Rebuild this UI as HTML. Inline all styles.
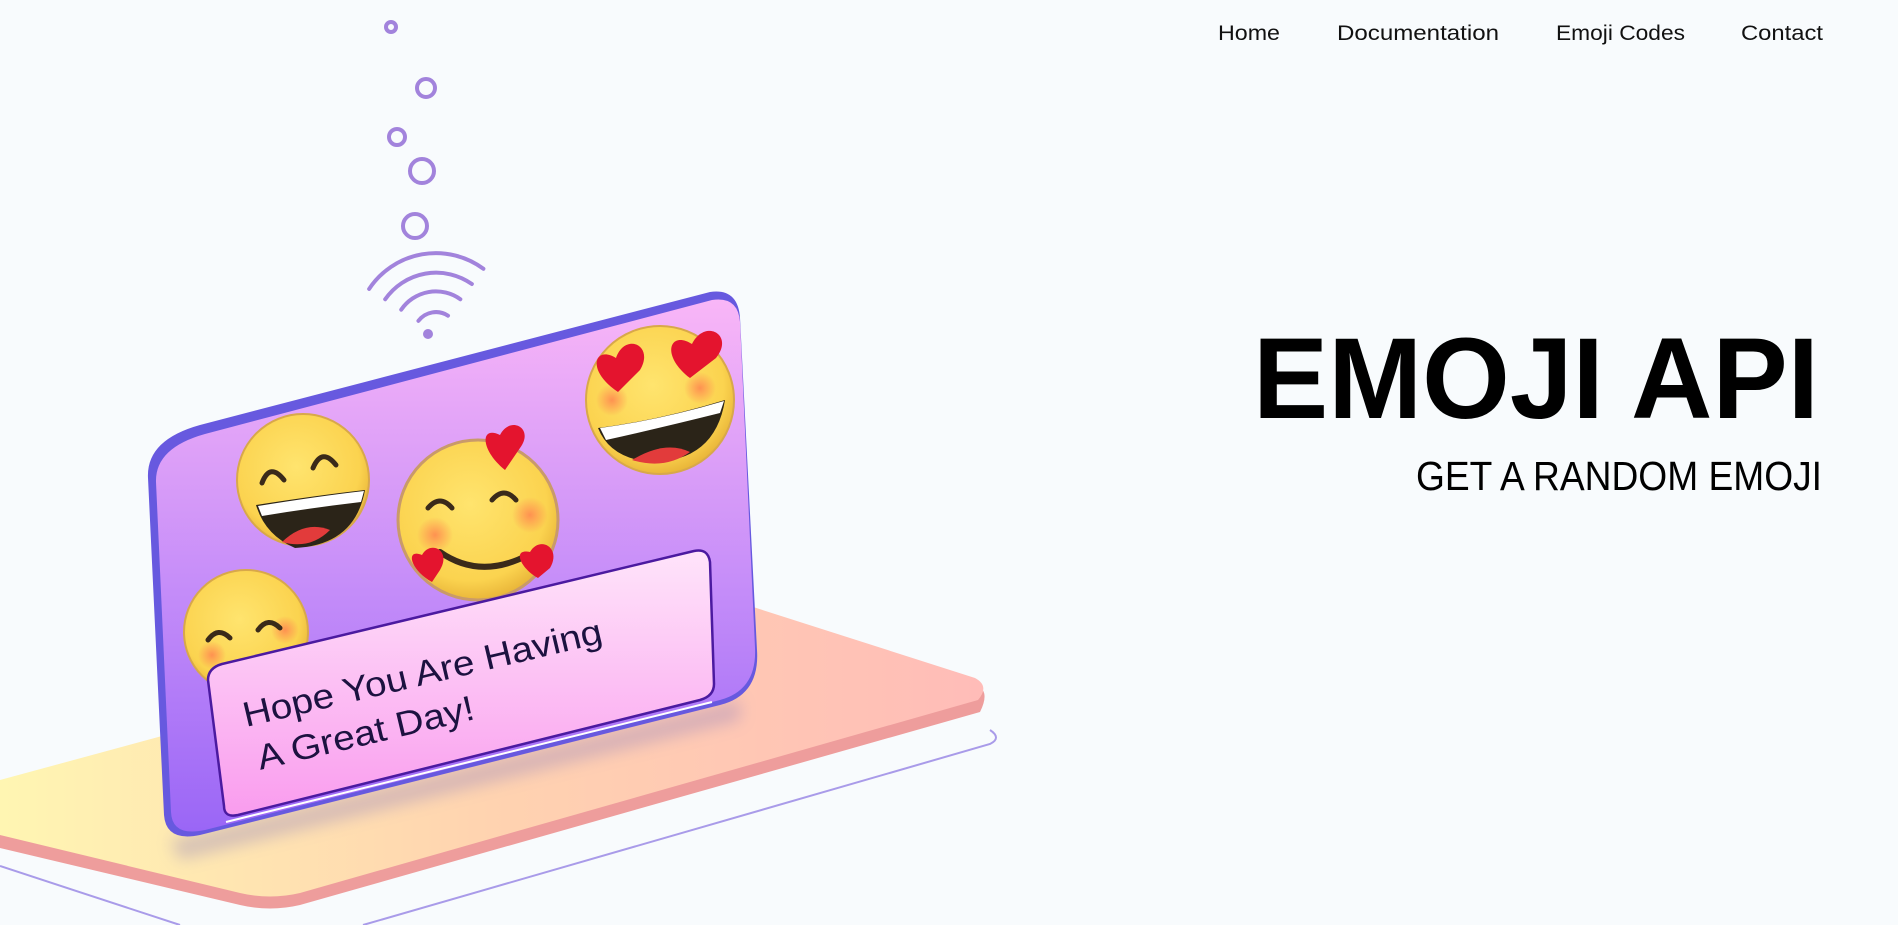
<!DOCTYPE html>
<html><head><meta charset="utf-8"><style>
html,body{margin:0;padding:0;background:#f8fbfd;width:1898px;height:925px;overflow:hidden}
svg{position:absolute;left:0;top:0}
text{font-family:"Liberation Sans",sans-serif}
</style></head><body>
<svg width="1898" height="925" viewBox="0 0 1898 925">
<defs>
<linearGradient id="plate" x1="0" y1="0" x2="1" y2="0"><stop offset="0" stop-color="#fff6b2"/><stop offset="0.5" stop-color="#ffd3b0"/><stop offset="1" stop-color="#ffbcb8"/></linearGradient>
<linearGradient id="card" x1="0" y1="0" x2="0" y2="1"><stop offset="0" stop-color="#f9b6f7"/><stop offset="0.55" stop-color="#c48cf9"/><stop offset="1" stop-color="#9a66f6"/></linearGradient>
<linearGradient id="msg" x1="0" y1="0" x2="0" y2="1"><stop offset="0" stop-color="#ffe4fa"/><stop offset="1" stop-color="#f99cee"/></linearGradient>
<radialGradient id="face" cx="0.45" cy="0.4" r="0.6"><stop offset="0" stop-color="#ffe46e"/><stop offset="0.8" stop-color="#fbd34f"/><stop offset="1" stop-color="#eab73a"/></radialGradient>
<radialGradient id="blush"><stop offset="0" stop-color="#ff8a50" stop-opacity="0.9"/><stop offset="1" stop-color="#ff8a50" stop-opacity="0"/></radialGradient>
<filter id="sh" x="-20%" y="-20%" width="140%" height="140%"><feGaussianBlur stdDeviation="8"/></filter>
</defs>
<path d="M0 799 L157 757 M0 866 L180 925 M363 925 L990 744 Q1002 738 990 730" stroke="#a99be9" stroke-width="2" fill="none"/>
<path d="M0 790 L700 600 L978 686 Q990 692 980 712 L300 905 Q270 912 240 905 L0 848 Z" fill="#ee9d9c"/>
<path d="M0 780 L700 590 L975 678 Q990 686 978 700 L300 893 Q270 900 240 893 L0 835 Z" fill="url(#plate)"/>
<path d="M170 840 L740 700 L740 720 L180 860 Z" fill="#8a7ac0" opacity="0.35" filter="url(#sh)"/>
<path d="M148 478 Q146 440 200 425 L710 292 Q738 288 740 318 L757 650 Q760 695 720 705 L200 835 Q166 842 164 815 Z" fill="#6759df"/>
<path d="M156 482 Q155 448 205 434 L712 300 Q738 296 740 322 L755 648 Q757 690 720 700 L205 830 Q172 837 171 812 Z" fill="url(#card)"/>
<g fill="none" stroke="#a283dc" stroke-width="4" stroke-linecap="round" transform="translate(8 0) rotate(-10 428 334)">
<path d="M413 318 A22 22 0 0 1 443 318"/>
<path d="M398 304 A42 42 0 0 1 458 304"/>
<path d="M384 291 A62 62 0 0 1 472 291"/>
<path d="M370 278 A80 80 0 0 1 486 278"/>
</g>
<circle cx="428" cy="334" r="5" fill="#a283dc"/>
<g fill="none" stroke="#a283dc" stroke-width="4">
<circle cx="391" cy="27" r="5"/><circle cx="426" cy="88" r="9"/><circle cx="397" cy="137" r="8"/><circle cx="422" cy="171" r="12"/><circle cx="415" cy="226" r="12"/>
</g>
<g>
<circle cx="303" cy="480" r="66" fill="url(#face)" stroke="#d8a84a" stroke-width="2"/>
<path d="M262 483 Q270 462 284 480 M313 468 Q322 447 336 465" stroke="#3a2a1a" stroke-width="5" fill="none" stroke-linecap="round"/>
<path d="M256 505 Q320 495 365 490 Q355 545 295 548 Q265 535 256 505 Z" fill="#2b2418"/>
<path d="M258 506 Q320 496 364 491 L361 502 Q310 508 262 516 Z" fill="#fff"/>
<path d="M282 542 Q305 520 330 530 Q310 550 282 542 Z" fill="#e23b3b"/>
</g>
<g>
<circle cx="660" cy="400" r="74" fill="url(#face)" stroke="#d8a84a" stroke-width="2"/>
<circle cx="612" cy="400" r="16" fill="url(#blush)"/><circle cx="700" cy="388" r="16" fill="url(#blush)"/>
<path d="M598 428 Q660 420 725 400 Q715 462 650 462 Q610 458 598 428 Z" fill="#2b2418"/>
<path d="M600 428 Q660 420 724 401 L720 413 Q660 428 606 440 Z" fill="#fff"/>
<path d="M632 460 Q665 440 690 452 Q665 470 632 460 Z" fill="#e23b3b"/>
<path d="M618 392 C585 370 595 345 616 358 C625 332 655 345 640 370 Z" fill="#e4142e"/>
<path d="M690 378 C660 355 670 330 692 344 C705 318 735 335 716 358 Z" fill="#e4142e"/>
</g>
<g>
<circle cx="478" cy="520" r="80" fill="url(#face)" stroke="#c99a6a" stroke-width="3"/>
<circle cx="435" cy="535" r="18" fill="url(#blush)"/><circle cx="530" cy="515" r="18" fill="url(#blush)"/>
<path d="M428 508 Q440 494 452 508 M492 500 Q504 486 516 500" stroke="#3a2a1a" stroke-width="5" fill="none" stroke-linecap="round"/>
<path d="M440 552 Q480 580 528 555" stroke="#3a2a1a" stroke-width="6" fill="none" stroke-linecap="round"/>
<path d="M505 470 C480 450 480 425 500 435 C510 415 535 428 520 448 Z" fill="#e4142e"/>
<path d="M432 582 C410 570 405 548 422 555 C430 540 452 550 440 570 Z" fill="#e4142e"/>
<path d="M538 578 C520 568 512 548 530 552 C540 535 562 548 550 568 Z" fill="#e4142e"/>
</g>
<g>
<circle cx="246" cy="632" r="62" fill="url(#face)" stroke="#d8a84a" stroke-width="2"/>
<circle cx="212" cy="655" r="14" fill="url(#blush)"/><circle cx="285" cy="630" r="14" fill="url(#blush)"/>
<path d="M208 640 Q218 626 230 638 M258 630 Q268 616 280 628" stroke="#3a2a1a" stroke-width="5" fill="none" stroke-linecap="round"/>
</g>
<path d="M208 680 Q208 668 222 664 L694 551 Q708 548 710 562 L714 684 Q714 696 700 700 L238 815 Q224 818 224 806 Z" fill="url(#msg)" stroke="#4b1aa0" stroke-width="2.5"/>
<path d="M226 822 L712 702" stroke="#fff" stroke-width="2"/>
<g transform="rotate(-13.3 246 727)" fill="#1c1240" font-size="35">
<text x="246" y="727" textLength="368" lengthAdjust="spacingAndGlyphs">Hope You Are Having</text>
<text x="250" y="772" textLength="222" lengthAdjust="spacingAndGlyphs">A Great Day!</text>
</g>
<g font-size="21" fill="#111">
<text x="1218" y="40" textLength="62" lengthAdjust="spacingAndGlyphs">Home</text>
<text x="1337" y="40" textLength="162" lengthAdjust="spacingAndGlyphs">Documentation</text>
<text x="1556" y="40" textLength="129" lengthAdjust="spacingAndGlyphs">Emoji Codes</text>
<text x="1741" y="40" textLength="82" lengthAdjust="spacingAndGlyphs">Contact</text>
</g>
<text x="1253" y="418" font-size="115" font-weight="bold" fill="#000" textLength="566" lengthAdjust="spacingAndGlyphs">EMOJI API</text>
<text x="1416" y="490" font-size="41" fill="#000" textLength="406" lengthAdjust="spacingAndGlyphs">GET A RANDOM EMOJI</text>
</svg>
</body></html>
